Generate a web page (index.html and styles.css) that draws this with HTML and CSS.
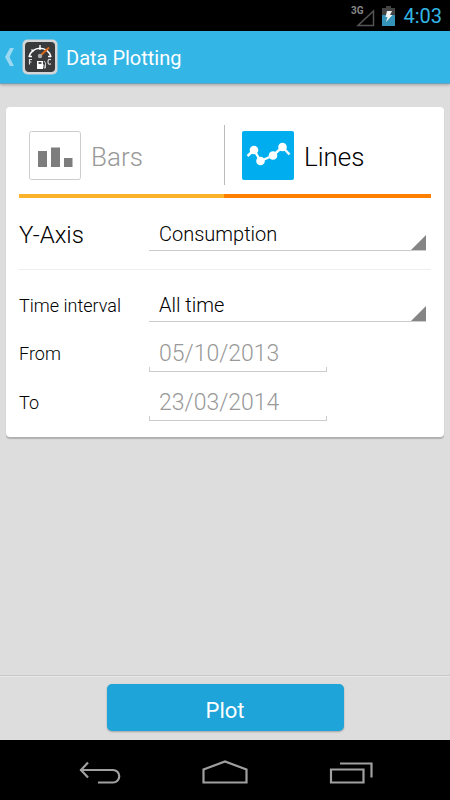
FILE: index.html
```html
<!DOCTYPE html>
<html lang="en">
<head>
<meta charset="utf-8">
<meta name="viewport" content="width=device-width, initial-scale=1">
<title>Data Plotting</title>
<link rel="stylesheet" href="styles.css">
</head>
<body>
<div class="status-bar">
  <svg class="signal" width="24" height="22" viewBox="0 0 24 22" aria-hidden="true">
    <path d="M7 20.500H22.500V6Z" fill="none" stroke="#555" stroke-width="1.500"/>
    <text class="signal-text" x="0" y="9">3G</text>
  </svg>
  <svg class="battery" width="13" height="20" viewBox="0 0 13 20" aria-hidden="true">
    <path d="M4 0h5v2h4v8H0V2h4z" fill="#444"/>
    <path d="M0 9h13v11H0z" fill="#3592b9"/>
    <path d="M5 5h5L8 9h2.500L4 16l1.500-5H3.500z" fill="#f4f4f4"/>
  </svg>
  <span class="clock">4:03</span>
</div>
<header class="action-bar">
  <a class="up" href="#" aria-label="Back">
    <svg width="9" height="18" viewBox="0 0 9 18" aria-hidden="true"><path d="M5 0H9L4.500 9L9 18H5L0 9Z" fill="#9bd9f3"/></svg>
    <svg width="36" height="36" viewBox="0 0 36 36" aria-hidden="true">
      <rect x=".5" y=".5" width="35" height="35" rx="5" fill="#d3d5d6"/>
      <rect x="3" y="3" width="30" height="30" rx="4" fill="#393a3c"/>
      <path d="M7 18A11.300 11.300 0 0 1 29 18" fill="none" stroke="#fff" stroke-width="1.600"/>
      <path d="M7 17.500h3M29 17.500h-3M9.500 10.500l2 2M18 6v5" stroke="#fff" stroke-width="1.400"/>
      <path d="M18 17L27 8.500" stroke="#e26a16" stroke-width="1.800"/>
      <circle cx="18" cy="17" r="2.200" fill="#aaa"/>
      <path d="M7.500 25.500v-5H10M7.500 23H9.500M29 20.800c-2-1-3-.3-3 2s1 3 3 2" fill="none" stroke="#ddd" stroke-width="1.200"/>
      <path d="M15 22h6v8h-6z" fill="#fff"/>
      <path d="M16.500 23h3v2h-3z" fill="#555"/>
      <path d="M21 26h1v3h1.500v-5l-1.500-2" fill="none" stroke="#ccc"/>
    </svg>
  </a>
  <h1 class="title">Data Plotting</h1>
</header>
<main class="content">
  <form class="card" id="plot-form">
    <div class="tabs" role="radiogroup" aria-label="Chart type">
      <label class="tab">
        <input class="tab-input" type="radio" name="chart" value="bars">
        <svg class="tab-icon" width="52" height="49" viewBox="0 0 52 49" aria-hidden="true">
          <rect x=".5" y=".5" width="51" height="48" rx="2" fill="#fff" stroke="#ccc"/>
          <path d="M9 20h9v16H9zM22 16.500h9V36h-9zM35 27h8.500v9H35z" fill="#7d7d7d"/>
        </svg>
        <span class="tab-text">Bars</span>
      </label>
      <label class="tab tab-lines">
        <input class="tab-input" type="radio" name="chart" value="lines" checked>
        <svg class="tab-icon" width="52" height="49" viewBox="0 0 52 49" aria-hidden="true">
          <rect width="52" height="49" rx="2" fill="#00aeef"/>
          <path d="M5.500 25L12 19L18.500 30L31 24.500L40.500 16L47.500 23.500" fill="none" stroke="#fff" stroke-width="2.400"/>
          <g fill="#fff"><circle cx="12" cy="19" r="4.300"/><circle cx="18.500" cy="30" r="4.300"/><circle cx="31" cy="24.500" r="4.300"/><circle cx="40.500" cy="16" r="4.300"/></g>
        </svg>
        <span class="tab-text">Lines</span>
      </label>
    </div>
    <div class="row row-axis">
      <label class="label-large" for="axis">Y-Axis</label>
      <div class="spinner"><select id="axis"><option>Consumption</option></select></div>
    </div>
    <div class="row row-interval">
      <label for="interval">Time interval</label>
      <div class="spinner"><select id="interval"><option>All time</option></select></div>
    </div>
    <div class="row row-date">
      <label for="from">From</label>
      <div class="date"><input id="from" type="text" value="05/10/2013" disabled></div>
    </div>
    <div class="row row-date">
      <label for="to">To</label>
      <div class="date"><input id="to" type="text" value="23/03/2014" disabled></div>
    </div>
  </form>
</main>
<footer class="footer">
  <button class="plot" type="submit" form="plot-form">Plot</button>
</footer>
<nav class="nav-bar" aria-label="System">
  <button type="button" aria-label="Back"><svg width="46" height="24" viewBox="0 0 46 24"><path d="M4 10H37A6.200 6.200 0 0 1 37 22.500H22M12 2.500L5 10L12 17.500" fill="none" stroke="#a0a0a0" stroke-width="2.200"/></svg></button>
  <button type="button" aria-label="Home"><svg width="46" height="24" viewBox="0 0 46 24"><path d="M1.500 22.500V9.500L23 1.500L44.500 9.500V22.500Z" fill="none" stroke="#a0a0a0" stroke-width="2.200"/></svg></button>
  <button type="button" aria-label="Recent apps"><svg width="46" height="24" viewBox="0 0 46 24"><path d="M3 9.500H35.500V22.500H3ZM12 3.500H43.500V17.500" fill="none" stroke="#a0a0a0" stroke-width="2.200"/></svg></button>
</nav>
</body>
</html>
```
FILE: styles.css
```css
* {
  box-sizing: border-box;
}

body {
  margin: 0;
  min-height: 100vh;
  display: flex;
  flex-direction: column;
  background: #ddd;
  color: #000;
  font-family: Roboto, "Liberation Sans", sans-serif;
  font-size: 18px;
}

button,
input,
select {
  font: inherit;
  color: inherit;
}

.status-bar {
  display: flex;
  align-items: center;
  justify-content: flex-end;
  height: 31px;
  padding-right: 8px;
  background: #000;
}

.signal {
  margin-right: 7px;
}

.signal-text {
  font-size: 10px;
  font-weight: 700;
  fill: #888;
}

.battery {
  margin-right: 8px;
}

.clock {
  font-size: 20px;
  color: #33b5e5;
}

.action-bar {
  display: flex;
  align-items: center;
  gap: 8px;
  height: 53px;
  padding-left: 5px;
  background: #33b5e5;
  border-bottom: 1px solid #6ba4ba;
  box-shadow: 0 1px 3px #0004;
}

.up {
  display: flex;
  align-items: center;
  gap: 8px;
}

.title {
  margin: 0;
  padding-top: 2px;
  font-size: 20px;
  font-weight: 400;
  color: #fff;
}

.content {
  flex: 1;
  padding: 23px 6px;
}

.card {
  padding: 0 13px 10px;
  background: #fff;
  border-radius: 4px;
  box-shadow: 0 2px 1px #0003;
  font-weight: 300;
}

.tabs {
  display: grid;
  grid-template-columns: calc(50% - 1px) 1fr;
  padding-top: 18px;
}

.tab {
  position: relative;
  display: flex;
  align-items: center;
  gap: 10px;
  height: 73px;
  padding: 0 0 8px 10px;
  border-bottom: 4px solid #fcb22b;
  font-size: 26px;
  color: #999;
}

.tab-text {
  padding-top: 3px;
}

.tab-lines {
  padding-left: 18px;
  border-bottom-color: #ff7f00;
  color: #000;
}

.tab-lines::before {
  content: "";
  position: absolute;
  left: 0;
  top: 0;
  width: 1px;
  height: 60px;
  background: #bbb;
}

.tab-input {
  position: absolute;
  opacity: 0;
}

.row {
  display: grid;
  grid-template-columns: 130px 1fr;
  align-items: center;
}

.row-axis {
  height: 72px;
  padding-top: 2px;
  border-bottom: 1px solid #eee;
}

.row-interval {
  height: 59px;
  padding-top: 12px;
}

.label-large {
  font-size: 24px;
}

.spinner {
  position: relative;
  margin-right: 5px;
  border-bottom: 1px solid #ccc;
}

.spinner::after {
  content: "";
  position: absolute;
  right: 0;
  bottom: 0;
  width: 15px;
  height: 15px;
  background: #858585;
  clip-path: polygon(100% 0, 100% 100%, 0 100%);
  pointer-events: none;
}

select {
  width: 100%;
  height: 32px;
  padding: 0 10px;
  border: 0;
  background: none;
  appearance: none;
  font-size: 20px;
}

.row-date {
  height: 49px;
}

.date {
  width: 178px;
  background:
    linear-gradient(#ccc, #ccc) left bottom / 1px 4px no-repeat,
    linear-gradient(#ccc, #ccc) right bottom / 1px 4px no-repeat;
  border-bottom: 1px solid #ccc;
}

.date input {
  display: block;
  width: 100%;
  height: 35px;
  padding: 0 10px;
  border: 0;
  background: none;
  font-size: 23px;
  color: #999;
}

.footer {
  display: flex;
  justify-content: center;
  padding: 8px 0 9px;
  border-top: 1px solid #c8c8c8;
  box-shadow: inset 0 1px #e8e8e8;
}

.plot {
  width: 237px;
  height: 47px;
  padding-top: 6px;
  border: 0;
  border-radius: 5px;
  background: #1ea4d8;
  box-shadow: 0 1px 2px #0004;
  font-size: 22px;
  color: #fff;
}

.nav-bar {
  display: flex;
  justify-content: center;
  gap: 80px;
  height: 60px;
  padding-top: 4px;
  background: #000;
}

.nav-bar button {
  display: flex;
  align-items: center;
  padding: 0;
  border: 0;
  background: none;
}
```
